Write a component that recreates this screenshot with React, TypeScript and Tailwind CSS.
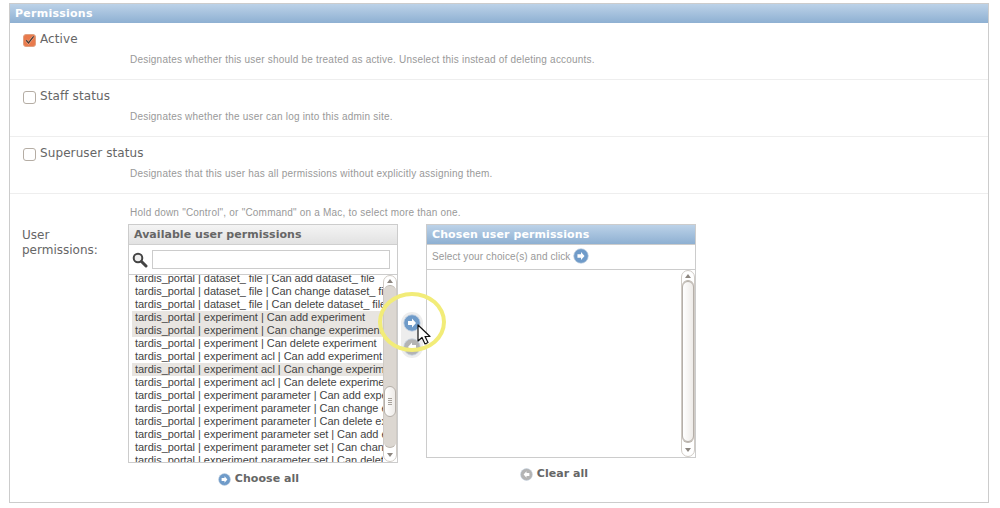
const dejavu = "font-['DejaVu_Sans',sans-serif]";

function Arrow({ dir = "right", color = "#6f9bc9", size = 18 }: { dir?: "right" | "left"; color?: string; size?: number }) {
  const pts = dir === "right" ? "5,7 9,7 9,4.5 13,9 9,13.5 9,11 5,11" : "13,7 9,7 9,4.5 5,9 9,13.5 9,11 13,11";
  return (
    <svg width={size} height={size} viewBox="0 0 18 18" className="shrink-0">
      <circle cx="9" cy="9" r="8.2" fill={color} stroke="#c4d2e2" strokeWidth="0.8" />
      <polygon points={pts} fill="#fff" />
    </svg>
  );
}

function Check({ label, help, checked, last }: { label: string; help: string; checked?: boolean; last?: boolean }) {
  return (
    <div className={`h-[57px] pl-[13px] ${last ? "" : "border-b border-[#eeeeee]"}`}>
      <div className="flex items-center h-[33px]">
        <div className="w-[13px] h-[13px] rounded-[3px] border border-[#b5ada4] bg-white mt-[1px] flex items-center justify-center shrink-0" style={checked ? { background: "#e97a4c", borderColor: "#e0a080" } : undefined}>
          {checked && (
            <svg width="13" height="13" viewBox="0 0 13 13">
              <path d="M2.6 6.2 L5.3 9.4 L11.4 1.6" fill="none" stroke="#fff" strokeWidth="2.6" opacity="0.5" />
              <path d="M2.6 6.2 L5.3 9.4 L11.4 1.6" fill="none" stroke="#4b3a30" strokeWidth="1.6" />
            </svg>
          )}
        </div>
        <span className={`${dejavu} text-[12px] text-[#666] ml-[4px] -mt-[2px] tracking-[0.1px]`}>{label}</span>
      </div>
      <p className="font-['Liberation_Sans',sans-serif] text-[10px] leading-[12px] text-[#999] ml-[107px] -mt-[2px] tracking-[0.21px]">{help}</p>
    </div>
  );
}

function Scrollbar({ thumbTop, thumbHeight, grip }: { thumbTop: number; thumbHeight: number; grip?: boolean }) {
  return (
    <div className="w-[14px] h-full shrink-0 flex flex-col bg-white border border-[#d0cbc5] rounded-[7px] overflow-hidden">
      <div className="h-[9px] flex items-center justify-center shrink-0 pt-[1px]">
        <div className="w-0 h-0 border-x-[3px] border-x-transparent border-b-[4px] border-b-[#8d8780]" />
      </div>
      <div className="flex-1 min-h-0 flex flex-col bg-[#dcd7d1] rounded-[6px] border-t border-b border-[#bdb7b0]">
        <div className="shrink-0" style={{ height: thumbTop }} />
        <div className="rounded-[7px] bg-gradient-to-r from-[#ffffff] to-[#eeebe8] border border-[#b5afa9] flex flex-col items-center justify-center gap-[1px] shrink-0" style={{ height: thumbHeight }}>
          {grip && (
            <>
              <div className="w-[4px] h-px bg-[#a8a29c]" />
              <div className="w-[4px] h-px bg-[#a8a29c]" />
              <div className="w-[4px] h-px bg-[#a8a29c]" />
              <div className="w-[4px] h-px bg-[#a8a29c]" />
            </>
          )}
        </div>
      </div>
      <div className="h-[13px] flex items-center justify-center shrink-0">
        <div className="w-0 h-0 border-x-[3px] border-x-transparent border-t-[4px] border-t-[#8d8780]" />
      </div>
    </div>
  );
}

const items: [string, boolean][] = [
  ["tardis_portal | dataset_ file | Can add dataset_ file", false],
  ["tardis_portal | dataset_ file | Can change dataset_ file", false],
  ["tardis_portal | dataset_ file | Can delete dataset_ file", false],
  ["tardis_portal | experiment | Can add experiment", true],
  ["tardis_portal | experiment | Can change experiment", true],
  ["tardis_portal | experiment | Can delete experiment", false],
  ["tardis_portal | experiment acl | Can add experiment acl", false],
  ["tardis_portal | experiment acl | Can change experiment acl", true],
  ["tardis_portal | experiment acl | Can delete experiment acl", false],
  ["tardis_portal | experiment parameter | Can add experiment parameter", false],
  ["tardis_portal | experiment parameter | Can change experiment parameter", false],
  ["tardis_portal | experiment parameter | Can delete experiment parameter", false],
  ["tardis_portal | experiment parameter set | Can add experiment parameter set", false],
  ["tardis_portal | experiment parameter set | Can change experiment parameter set", false],
  ["tardis_portal | experiment parameter set | Can delete experiment parameter set", false],
];

export default function App() {
  return (
    <div className="w-[1000px] h-[508px] bg-white overflow-hidden pt-[3px] pl-[9px] font-['Liberation_Sans',sans-serif]">
      <div className="w-[980px] h-[500px] border border-[#cccccc] relative">
        <div className={`${dejavu} h-[19px] bg-gradient-to-b from-[#bcd2e8] to-[#8eb0d2] text-white font-bold text-[11px] leading-[19px] pl-[5px] tracking-[0.25px]`}>
          Permissions
        </div>
        <Check checked label="Active" help="Designates whether this user should be treated as active. Unselect this instead of deleting accounts." />
        <Check label="Staff status" help="Designates whether the user can log into this admin site." />
        <Check label="Superuser status" help="Designates that this user has all permissions without explicitly assigning them." />

        <div className="flex pl-[12px] pt-[13px]">
          <div className={`${dejavu} w-[106px] shrink-0 text-[12px] leading-[15px] text-[#666] pt-[21px]`}>User<br />permissions:</div>
          <div>
            <p className="text-[10px] leading-[12px] text-[#999] ml-[2px] tracking-[0.21px]">Hold down "Control", or "Command" on a Mac, to select more than one.</p>
            <div className="flex mt-[5px]">
              <div className="w-[270px] shrink-0">
                <div className="border border-[#cccccc] h-[239px] flex flex-col">
                  <div className={`${dejavu} h-[20px] bg-gradient-to-b from-[#f4f4f4] to-[#e2e2e2] border-b border-[#cfcfcf] font-bold text-[11px] leading-[19px] text-[#666] pl-[5px] tracking-[0.04px] shrink-0`}>Available user permissions</div>
                  <div className="h-[30px] flex items-center border-b border-[#cccccc] shrink-0 pl-[3px]">
                    <svg width="16" height="16" viewBox="0 0 16 16" className="shrink-0">
                      <circle cx="6" cy="6" r="4.3" fill="#eee" stroke="#444" strokeWidth="2" />
                      <path d="M9.5 9.5 L14 14" stroke="#444" strokeWidth="3" strokeLinecap="round" />
                    </svg>
                    <div className="w-[238px] h-[19px] ml-[4px] border border-[#cccccc] bg-white" />
                  </div>
                  <div className="flex flex-1 min-h-0">
                    <div className="flex-1 min-w-0 overflow-hidden pt-[1px] pl-[3px]">
                      <div className="-mt-[4px] tracking-[-0.04px]">
                        {items.map(([t, sel]) => (
                          <div key={t} className={`h-[13px] leading-[13px] text-[11px] text-[#444] pl-[3px] whitespace-nowrap overflow-hidden ${sel ? "bg-[#e8e5e1]" : ""}`}>{t}</div>
                        ))}
                      </div>
                    </div>
                    <Scrollbar thumbTop={100} thumbHeight={31} grip />
                  </div>
                </div>
                <div className={`${dejavu} flex items-center justify-center h-[32px] font-bold text-[11px] text-[#666] gap-[4px] tracking-[0.05px] pr-[9px]`}>
                  <Arrow size={13} />
                  Choose all
                </div>
              </div>
              <div className="w-[28px] shrink-0 relative">
                <div className="absolute left-[3px] top-[88px] w-[22px] h-[46px] rounded-[11px] bg-[#ededed] flex flex-col items-center justify-between py-[2px]">
                  <Arrow size={18} />
                  <Arrow dir="left" color="#b4b4b4" size={18} />
                </div>
              </div>
              <div className="w-[270px] shrink-0">
                <div className="border border-[#cccccc] h-[234px] flex flex-col">
                  <div className={`${dejavu} h-[20px] bg-gradient-to-b from-[#bcd2e8] to-[#8eb0d2] border-b border-[#cccccc] font-bold text-[11px] leading-[19px] text-white pl-[5px] tracking-[0.1px] shrink-0`}>Chosen user permissions</div>
                  <div className="h-[25px] flex items-center border-b border-[#cccccc] shrink-0 pl-[5px] pb-[2px] text-[10px] text-[#999] tracking-[0.11px] gap-[3px]">
                    Select your choice(s) and click
                    <Arrow size={16} />
                  </div>
                  <div className="flex flex-1 min-h-0 justify-end">
                    <Scrollbar thumbTop={0} thumbHeight={161} />
                  </div>
                </div>
                <div className={`${dejavu} flex items-center justify-center h-[32px] font-bold text-[11px] text-[#666] gap-[4px] tracking-[0.05px] pr-[14px]`}>
                  <Arrow dir="left" color="#b4b4b4" size={13} />
                  Clear all
                </div>
              </div>
            </div>
          </div>
        </div>

        <div className="absolute left-[368px] top-[288px] w-[68px] h-[60px] rounded-[50%] border-[4px] border-[#f2ec78]" />
        <svg width="16" height="24" viewBox="0 0 16 24" className="absolute left-[407px] top-[320px]">
          <path d="M1 1 L1 17 L5 13.5 L8 20 L11 18.5 L8 12.5 L13 12.5 Z" fill="#fff" stroke="#111" strokeWidth="1.2" strokeLinejoin="round" />
        </svg>
      </div>
    </div>
  );
}
